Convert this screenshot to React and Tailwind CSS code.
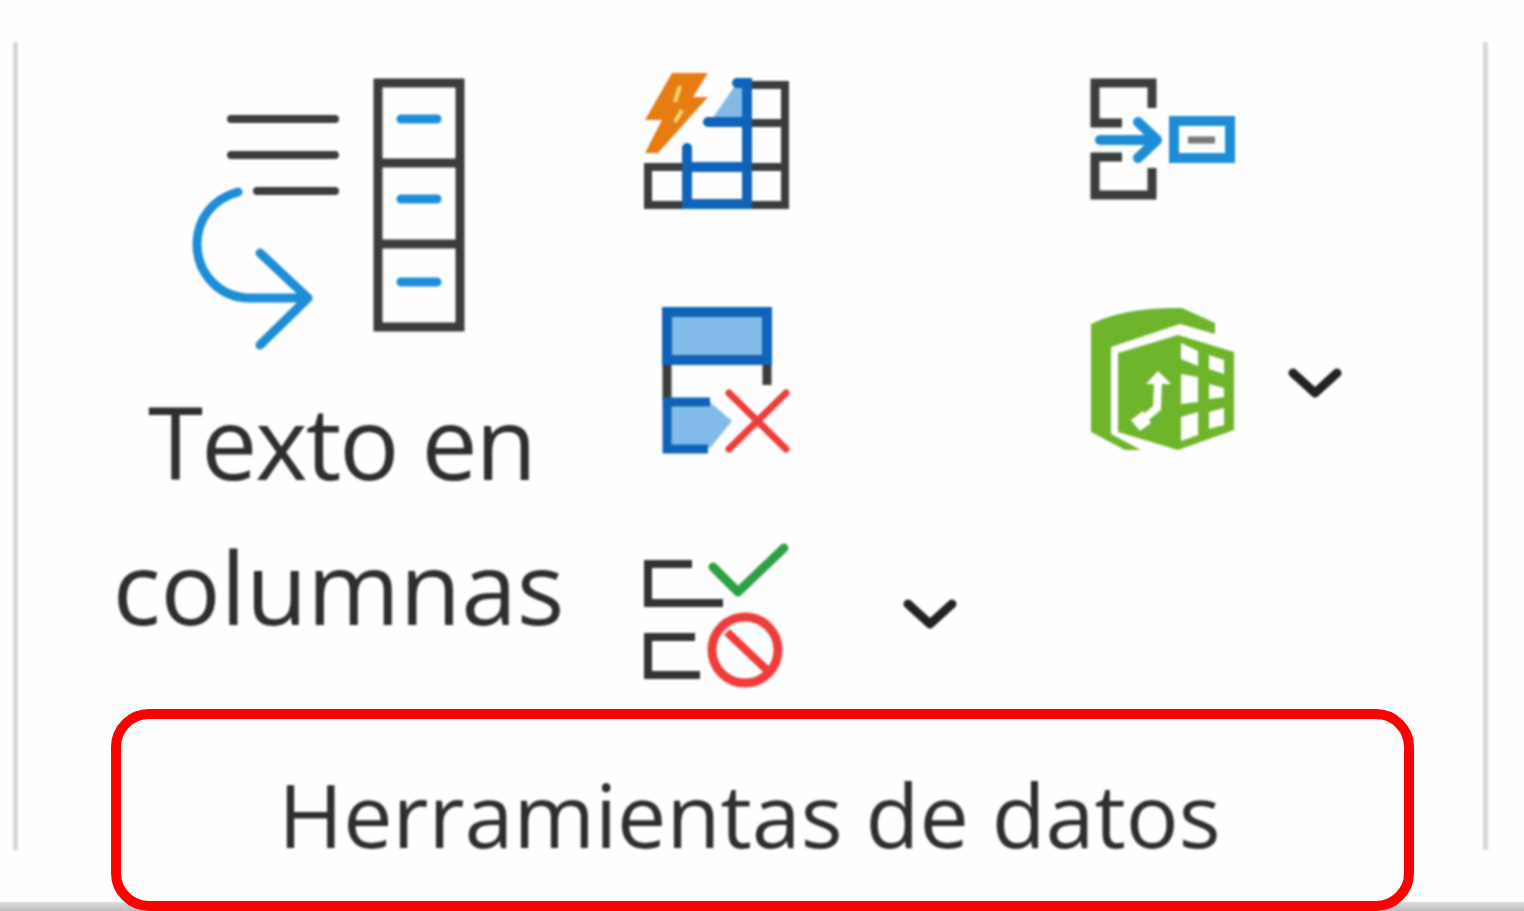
const BLUE = '#1d8dd6';
const DARK_BLUE = '#0f63b8';
const LIGHT_BLUE = '#82bbe9';
const GRAY = '#3c3c3c';
const RED = '#ee3b3b';
const GREEN = '#6fb52c';

// Every icon uses the page's own coordinates in its viewBox
const TextToColumnsIcon = () => (
  <svg viewBox="190 70 280 285" className="w-[280px] h-[285px] blur-[1.2px]" fill="none" strokeLinecap="round">
    <g stroke={GRAY} strokeWidth="8">
      <path d="M231 119H335M231 155H335M257 191H335" />
      <path strokeWidth="9" strokeLinecap="square" d="M378 83H460V327H378ZM378 163H460M378 244H460" />
    </g>
    <path stroke={BLUE} strokeWidth="9" d="M401 119H437M401 199H437M401 282H437" />
    <path stroke={BLUE} strokeWidth="9" strokeLinejoin="round" d="M238 192C212 199 197 220 197 244C197 274 220 298 250 298H308M260 253L308 298L260 345" />
  </svg>
);

const FlashFillIcon = () => (
  <svg viewBox="640 65 150 150" className="w-[150px] h-[150px] blur-[1.2px]" fill="none">
    <path stroke={GRAY} strokeWidth="8" d="M750 85H785V205H648V167H785M750 123H785" />
    <path fill={LIGHT_BLUE} d="M736 84H747V122H710Z" />
    <path stroke={DARK_BLUE} strokeWidth="10" strokeLinecap="round" d="M737 83H747V204H687V148M687 167H747M708 122H747" />
    <path fill="#e67c12" d="M672 73H708L693 97H708L658 153H645L662 120H645Z" />
    <path stroke="#f7d774" strokeWidth="4" d="M680 86L675 102M682 110L675 122" />
  </svg>
);

const RemoveDuplicatesIcon = () => (
  <svg viewBox="655 300 140 160" className="w-[140px] h-[160px] blur-[1.2px]" fill="none">
    <path stroke={GRAY} strokeWidth="9" d="M667 362V400M767 362V385" />
    <rect x="667" y="312" width="100" height="48" fill={LIGHT_BLUE} stroke={DARK_BLUE} strokeWidth="10" />
    <path fill={LIGHT_BLUE} d="M667 402H710L732 421L710 448H667Z" />
    <path stroke={DARK_BLUE} strokeWidth="9" d="M710 402H667V449H708" />
    <path stroke={RED} strokeWidth="7" strokeLinecap="round" d="M729 393L786 449M786 393L729 449" />
  </svg>
);

const DataValidationIcon = () => (
  <svg viewBox="640 540 150 150" className="w-[150px] h-[150px] blur-[1.2px]" fill="none">
    <path stroke="#333333" strokeWidth="8" d="M692 564H648V603H723M695 637H648V675H700" />
    <path stroke="#2ea043" strokeWidth="9" strokeLinecap="round" strokeLinejoin="round" d="M713 567L738 592L784 548" />
    <circle cx="745" cy="650" r="33" stroke={RED} strokeWidth="9" fill="#fbfeff" />
    <path stroke={RED} strokeWidth="8" d="M727 632L767 670" />
  </svg>
);

const ConsolidateIcon = () => (
  <svg viewBox="1085 75 155 130" className="w-[155px] h-[130px] blur-[1.2px]" fill="none">
    <path stroke={GRAY} strokeWidth="9" d="M1152 108V83H1095V123H1122M1122 157H1095V195H1152V168" />
    <path stroke={BLUE} strokeWidth="10" strokeLinecap="round" strokeLinejoin="round" d="M1100 140H1156M1138 122L1157 140L1138 158" />
    <rect x="1174" y="121" width="56" height="37" stroke={BLUE} strokeWidth="10" />
    <path stroke="#777777" strokeWidth="7" d="M1188 140H1215" />
  </svg>
);

const DataModelIcon = () => (
  <svg viewBox="1085 300 155 155" className="w-[155px] h-[155px] blur-[1.2px]">
    <path fill={GREEN} d="M1091 324Q1125 307 1182 308L1215 323V334L1180 324L1111 347V434L1141 450H1125L1091 432Z" />
    <path fill={GREEN} d="M1118 353L1178 335L1234 352V430L1178 450L1118 432Z" />
    <g fill="#ffffff">
      <path d="M1181 343L1198 351V366L1181 359Z" />
      <path d="M1209 355L1224 360V374L1209 369Z" />
      <path d="M1181 374L1198 377V402L1181 404Z" />
      <path d="M1209 384L1224 388V397L1209 399Z" />
      <path d="M1181 417L1198 412V435L1181 441Z" />
      <path d="M1209 412L1224 408V425L1209 429Z" />
      <path d="M1146 384L1158 371L1171 384Z" />
      <path d="M1131 420L1143 411L1151 423L1140 431Z" />
    </g>
    <path stroke="#ffffff" strokeWidth="8" fill="none" d="M1158 382L1157 408L1140 422" />
  </svg>
);

const Chevron = () => (
  <svg viewBox="0 0 60 36" className="w-[60px] h-[36px] blur-[0.8px]" fill="none">
    <path stroke="#222222" strokeWidth="9" strokeLinecap="round" strokeLinejoin="round" d="M8 7L30 27L52 7" />
  </svg>
);

const Divider = ({ className }) => (
  <div className={`w-[5px] h-[808px] mt-[42px] bg-[#d8d8d8] blur-[0.8px] ${className}`}></div>
);

export default function App() {
  return (
    <div
      className="relative flex items-start w-full h-[911px] overflow-hidden bg-[#fefefe] text-[#2e2e2e]"
      style={{ fontFamily: '"Open Sans", sans-serif' }}
    >
      <div className="absolute left-0 right-0 bottom-0 h-[9px] bg-linear-to-b from-[#dcdcdc] to-[#bdbdbd]"></div>
      <Divider className="ml-[13px]" />

      <div className="relative ml-[93px] w-[1303px] flex flex-col">
        <div className="flex h-[709px]">
          {/* Texto en columnas */}
          <div className="w-[455px] pt-[70px] flex flex-col items-center">
            <div className="self-start ml-[79px]">
              <TextToColumnsIcon />
            </div>
            <p className="mt-[14px] pl-[2px] text-[100px] leading-[145px] text-center whitespace-nowrap blur-[0.8px]">
              <span className="block pl-[4px] tracking-[-2px]">Texto en</span>
              <span className="block pr-[2px]">columnas</span>
            </p>
          </div>

          {/* Small tools */}
          <div className="ml-[74px] w-[445px] pt-[65px] flex flex-col">
            <FlashFillIcon />
            <div className="mt-[85px] ml-[15px]">
              <RemoveDuplicatesIcon />
            </div>
            <div className="mt-[80px] flex items-center">
              <DataValidationIcon />
              <div className="ml-[110px]"><Chevron /></div>
            </div>
          </div>

          <div className="pt-[75px] flex flex-col">
            <ConsolidateIcon />
            <div className="mt-[95px] flex items-center">
              <DataModelIcon />
              <div className="ml-[45px] mt-[12px]"><Chevron /></div>
            </div>
          </div>
        </div>

        {/* Group label, circled in red */}
        <div className="h-[202px] pt-[8px] pr-[26px] border-[10px] border-[#ff0000] rounded-[38px] bg-[#fefefe] flex items-center justify-center">
          <span className="text-[88px] whitespace-nowrap blur-[0.8px]">Herramientas de datos</span>
        </div>
      </div>

      <Divider className="ml-[69px]" />
    </div>
  );
}
